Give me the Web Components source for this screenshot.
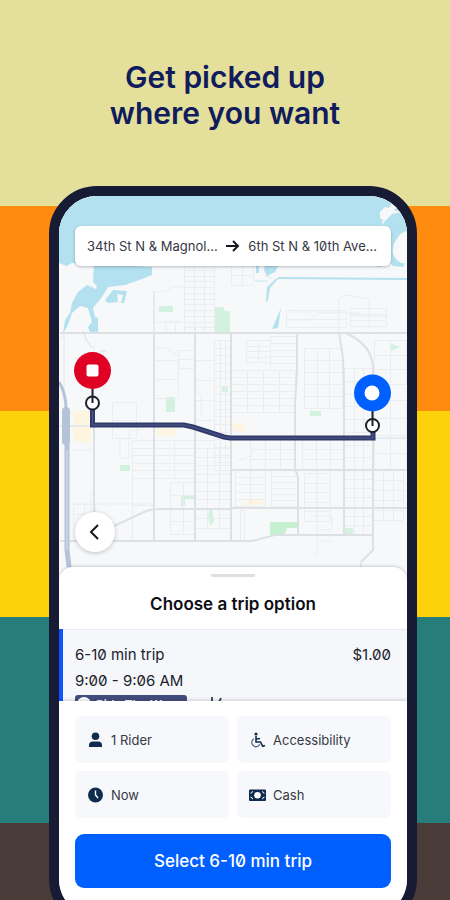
<!DOCTYPE html>
<html lang="en">
<head>
<meta charset="utf-8">
<meta name="viewport" content="width=device-width, initial-scale=1">
<title>Get picked up where you want</title>
<style>
    body {
        margin: 0;
        font-family: Inter, "Liberation Sans", sans-serif;
        font-variant-numeric: slashed-zero;
        color: #20222c;
    }
</style>
</head>
<body>
<promo-poster>
    <span slot="headline">Get picked up<br>where you want</span>
    <phone-frame>
        <trip-map>
            <route-bar>
                <span slot="from">34th St N &amp; Magnol...</span>
                <span slot="to">6th St N &amp; 10th Ave...</span>
            </route-bar>
        </trip-map>
        <trip-sheet>
            <span slot="title">Choose a trip option</span>
            <trip-option>
                <span slot="name">6-10 min trip</span>
                <span slot="price">$1.00</span>
                <span slot="time">9:00 - 9:06 AM</span>
                <span slot="badge">Ride The Wave</span>
            </trip-option>
        </trip-sheet>
        <booking-panel>
            <option-chip icon="rider">1 Rider</option-chip>
            <option-chip icon="wheelchair">Accessibility</option-chip>
            <option-chip icon="clock">Now</option-chip>
            <option-chip icon="cash">Cash</option-chip>
            <span slot="action">Select 6-10 min trip</span>
        </booking-panel>
    </phone-frame>
</promo-poster>

<script>
const posterTemplate = document.createElement('template');
posterTemplate.innerHTML = `
<style>
    :host {
        display: block;
        box-sizing: border-box;
        height: 100vh;
        min-height: 640px;
        overflow: hidden;
        padding: 59px 33px 0 49px;
        background: linear-gradient(
            #e4df9b 206px,
            #ff8c0e 206px 411px,
            #fdd20b 411px 617px,
            #277d79 617px 823px,
            #4a3c38 823px);
    }

    h1 {
        margin: 0 16px 55px 0;
        font-size: 30px;
        font-weight: 600;
        line-height: 36px;
        text-align: center;
        color: #101c5c;
    }
</style>
<h1><slot name="headline"></slot></h1>
<slot></slot>
`;

const phoneTemplate = document.createElement('template');
phoneTemplate.innerHTML = `
<style>
    :host {
        display: flex;
        flex-direction: column;
        border: 10px solid #181b34;
        border-radius: 48px;
        overflow: hidden;
        background: #fff;
    }
</style>
<slot></slot>
`;

const mapTemplate = document.createElement('template');
mapTemplate.innerHTML = `
<style>
    :host {
        display: grid;
        height: 384px;
    }

    svg.map {
        grid-area: 1 / 1;
        display: block;
        width: 100%;
        height: 384px;
    }

    .overlay {
        grid-area: 1 / 1;
        z-index: 1;
        display: flex;
        flex-direction: column;
        justify-content: space-between;
        align-items: flex-start;
        padding: 30px 16px 28px;
    }

    slot {
        display: block;
        width: 100%;
    }

    button {
        display: grid;
        place-items: center;
        width: 40px;
        height: 40px;
        padding: 0;
        border: 0;
        border-radius: 50%;
        background: #fff;
        box-shadow: 0 1px 4px rgba(30, 35, 60, .25);
    }

    .minor { stroke: #ebedf0; stroke-width: 1; }
    .major { stroke: #dee1e4; stroke-width: 2; }
</style>
<svg class="map" viewBox="59 196 348 384" preserveAspectRatio="xMidYMid slice" fill="none" aria-hidden="true">
    <path fill="#f7f8f9" d="M59 196h348v384H59z"/>

    <!-- bay, inlets and canals -->
    <g fill="#b3e1ef">
        <path d="M59 196h348v64l-4 7-10-1-2-3-12 4-6-2H94l-22-2-6 3-7-3z"/>
        <path d="M94 264l58 3v8l-10 4-17 6-17 2-6 10-9 11 2 9 3 1v14h-8l-2-5 4-5-4-14-8-2-8 7-5 14-4 6 2-13 5-7 2-10 6-11 9-7 9 4 1-3-4-4z"/>
        <path d="M105 300l8-10 14 1-3 12h-3l2-8-6-1 1 8-10 1z"/>
        <path d="M277 278l-10 9-1 16 2-3 2-12 8-9zM281 308l-9 21 6-1z"/>
        <path d="M265 264h14l-4 8-8 4-3-6zM256 266h3v7h-3z"/>
        <path d="M278 277l129 1v2l-129-1z"/>
    </g>
    <path stroke="#c8e6ea" d="M83 331l3 8 6 9M100 351h6M255 281h13M269 270l8-5M265 275l6 3"/>
    <g fill="#f7f8f9">
        <path d="M407 231q-8 2-10 8-5 6-4 14 2 8 9 10l5 1z"/>
        <path d="M380 212l5-5 4 1 4-6 6 5-6 3 8 2-9 2-7 7-4 5 2-6-3-2z"/>
    </g>

    <!-- parks -->
    <g fill="#d3f1df">
        <path d="M159 306h14v6h-14zM214 307h9l2 4h5v21h-16zM166 397h9v15h-9zM222 386h6v6h-6zM120 465h10v6h-10zM310 411h11v5h-11zM391 344l9 3-9 4zM181 495h13v4h-9v7h-4zM209 510h3l2 10-3 6-3-7zM344 528h9v7h-9z"/>
        <path fill="#c5f0d2" d="M270 522h28v6h-11l-3 7h-14z"/>
    </g>
    <g fill="#fdf5df">
        <path d="M73 411h18v32l-18-2zM157 428h18v8h-18zM233 423h12v8h-12zM246 500h16v5h-16z"/>
    </g>

    <g class="minor blocks"></g>
    <g class="minor">
        <path d="M154 292h10l8-5h12M166 333v-12h14M339 332v-33l6-4 24 4v30M285 320h24l10-7h42M291 312h52M350 316h38M238 460q16-1 16-14M94 345v100M91 512v-20M90 402q12-8 18-22M120 438v20h9v-28h15M317 470v86M155 349l10-2 14 10v11M193 386l8 10v20M310 516h22v14h-13M320 541h12M73 450h21M73 504h81"/>
    </g>

    <g class="major">
        <path d="M60 333h347M94 425v100M154 333v208M195 333v208M231 333v208M297 333v40l-2 30v66l3 8v58M339 333l4 25 1 28v149M346 333q26 12 27 34v183l-12 12M231 470h176M231 508h176M114 526l30-14q6-3 15-3h72M60 541h192l23-6h98"/>
        <path stroke="#e6eaee" d="M154 291v42M60 426h32M374 438h33M361 562v18"/>
    </g>
    <g stroke="#e2e6ee">
        <path d="M64 335v58M60 338l6-5"/>
    </g>

    <!-- interstate -->
    <g stroke="#b4c3d8">
        <path stroke-width="3" d="M59 382q7 12 7 26"/>
        <path stroke-width="8" stroke-linecap="round" d="M66 411v30"/>
        <path stroke-width="5" d="M67 440v110l2 17"/>
        <path stroke="#dce4ee" d="M67 450v100"/>
    </g>

    <!-- route -->
    <path stroke="#303a6b" stroke-width="5" d="M92.500 403v22H184l9 2 31 10 6 1h143v-13"/>
    <path stroke="#4e598a" stroke-width="1" d="M92.500 410v15H184l9 2 31 10 6 1h143v-10"/>

    <g stroke="#1d202b" stroke-width="2" fill="#fff">
        <circle cx="92.500" cy="403" r="6.500"/>
        <path d="M92.500 387v16"/>
        <circle cx="372.500" cy="425.500" r="6.500"/>
        <path d="M372.500 409v17"/>
    </g>
    <circle cx="92.500" cy="370.500" r="18.500" fill="#e00225"/>
    <rect x="86.500" y="364.500" width="12" height="12" rx="2" fill="#fff"/>
    <circle cx="372.500" cy="393" r="18.500" fill="#005fff"/>
    <circle cx="372" cy="393" r="7.500" fill="#fff"/>
</svg>
<div class="overlay">
    <slot></slot>
    <button type="button" aria-label="Back">
        <svg width="18" height="18" viewBox="0 0 18 18" fill="none" stroke="#16181f" stroke-width="2"><path d="M12 2L5 9l7 7"/></svg>
    </button>
</div>
`;

const routeBarTemplate = document.createElement('template');
routeBarTemplate.innerHTML = `
<style>
    :host {
        display: block;
    }

    button {
        display: flex;
        align-items: center;
        justify-content: space-between;
        width: 100%;
        height: 40px;
        padding: 0 14px 0 12px;
        border: 0;
        border-radius: 6px;
        background: #fff;
        box-shadow: 0 1px 3px rgba(30, 35, 60, .3);
        font: inherit;
        font-size: 13px;
        line-height: 20px;
        color: #353843;
        white-space: nowrap;
    }
</style>
<button type="button">
    <slot name="from"></slot>
    <svg width="14" height="14" viewBox="0 0 14 14" fill="none" stroke="#16181f" stroke-width="2" aria-hidden="true"><path d="M0 7h12M7 2l5 5-5 5"/></svg>
    <slot name="to"></slot>
</button>
`;

const sheetTemplate = document.createElement('template');
sheetTemplate.innerHTML = `
<style>
    :host {
        display: block;
        z-index: 1;
        margin-top: -13px;
        border-radius: 14px 14px 0 0;
        background: #fff;
        box-shadow: 0 -1px 3px rgba(30, 35, 60, .2);
    }

    .handle {
        width: 44px;
        height: 3px;
        margin: 0 auto;
        border-top: 7px solid transparent;
        border-radius: 1px;
        background: #dfe0e3;
        background-clip: padding-box;
    }

    h2 {
        margin: 0;
        padding: 15px 0 13px;
        font-size: 17px;
        font-weight: 600;
        line-height: 24px;
        text-align: center;
        color: #0d0e14;
    }
</style>
<div class="handle"></div>
<h2><slot name="title"></slot></h2>
<slot></slot>
`;

const tripOptionTemplate = document.createElement('template');
tripOptionTemplate.innerHTML = `
<style>
    /* only the top of the third line shows above the booking panel */
    :host {
        display: block;
        height: 72px;
        overflow: hidden;
    }

    button {
        display: flex;
        flex-direction: column;
        width: 100%;
        padding: 13px 16px 13px 12px;
        border: 0;
        border-left: 4px solid #0a55ff;
        background: #f5f7fb;
        box-shadow: inset 0 1px #e9ebf0;
        font: inherit;
        font-size: 15px;
        line-height: 26px;
        text-align: left;
        color: #20222c;
    }

    .row {
        display: flex;
        align-items: center;
        justify-content: space-between;
        width: 100%;
    }

    .details {
        justify-content: flex-start;
        gap: 20px;
        margin-top: 1px;
    }

    .badge {
        display: flex;
        align-items: center;
        gap: 5px;
        height: 20px;
        padding: 0 5px 0 2px;
        border-radius: 3px;
        background: #414b7c;
        font-size: 12px;
        font-weight: 600;
        line-height: 18px;
        color: #fff;
    }
</style>
<button type="button">
    <span class="row"><slot name="name"></slot><slot name="price"></slot></span>
    <slot name="time"></slot>
    <span class="row details">
        <span class="badge">
            <svg width="14" height="16" viewBox="0 0 14 16" aria-hidden="true"><circle cx="7" cy="7" r="7" fill="#fff"/></svg>
            <slot name="badge"></slot>
        </span>
        <svg width="16" height="18" viewBox="0 0 16 18" fill="none" stroke="#4b4e5a" stroke-width="2" aria-hidden="true"><path d="M5 1v5l-3 4M4 6l4 3M14 2l-4 8 3 6"/></svg>
    </span>
</button>
`;

const panelTemplate = document.createElement('template');
panelTemplate.innerHTML = `
<style>
    :host {
        display: block;
        z-index: 1;
        padding: 15px 16px 29px;
        background: #fff;
        box-shadow: 0 -1px 3px rgba(30, 35, 60, .2);
    }

    .chips {
        display: grid;
        grid-template-columns: 1fr 1fr;
        gap: 8px;
        margin-bottom: 16px;
    }

    button {
        display: block;
        width: 100%;
        height: 54px;
        border: 0;
        border-radius: 9px;
        background: #005fff;
        font: inherit;
        font-size: 17px;
        font-weight: 500;
        color: #fff;
    }
</style>
<div class="chips"><slot></slot></div>
<button type="button"><slot name="action"></slot></button>
`;

const chipTemplate = document.createElement('template');
chipTemplate.innerHTML = `
<style>
    :host {
        display: block;
    }

    button {
        display: flex;
        align-items: center;
        gap: 7px;
        width: 100%;
        height: 47px;
        padding: 0 12px;
        border: 0;
        border-radius: 6px;
        background: #f6f8fb;
        font: inherit;
        font-size: 13px;
        color: #353843;
    }

    svg {
        display: block;
    }
</style>
<button type="button">
    <svg width="17" height="16" viewBox="0 0 17 16" aria-hidden="true"></svg>
    <slot></slot>
</button>
`;

const icons = {
    rider: '<circle cx="8.500" cy="4.300" r="3.800" fill="#0f2b4d"/><path fill="#0f2b4d" d="M2 15v-2q0-3.500 4-3.500h5q4 0 4 3.500v2z"/>',
    wheelchair: '<g fill="none" stroke="#0f2b4d" stroke-width="1.600"><path d="M7 4v6h4.500l2.200 4.200 2.300-.8M7 6.800h4"/><path stroke="#5a6c86" stroke-width="1.300" d="M5 6.800a4.200 4.200 0 1 0 5.800 5.400"/></g><circle cx="7" cy="2" r="1.600" fill="#0f2b4d"/>',
    clock: '<circle cx="8.500" cy="8" r="7.500" fill="#0f2b4d"/><path fill="none" stroke="#fff" stroke-width="1.400" d="M8.500 3.500V8l2.500 3"/>',
    cash: '<rect x="0" y="2.500" width="17" height="11.500" rx="1" fill="#0f2b4d"/><circle cx="8.500" cy="8.200" r="3.300" fill="#fff"/><path fill="none" stroke="#fff" d="M1.500 6.200q2 0 2-2M15.500 6.200q-2 0-2-2M1.500 10.200q2 0 2 2M15.500 10.200q-2 0-2 2"/>'
};

// street grids of the map: x, y, width, height, columns, rows
const blocks = [
    [184, 264, 30, 69, 3, 12],
    [154, 322, 41, 11, 2, 1],
    [178, 350, 17, 18, 1, 2],
    [214, 340, 17, 130, 3, 17],
    [231, 264, 22, 21, 2, 2],
    [246, 340, 24, 22, 2, 4],
    [270, 336, 26, 34, 1, 5],
    [231, 370, 64, 42, 4, 6],
    [304, 348, 38, 60, 3, 5],
    [344, 368, 29, 102, 3, 8],
    [374, 340, 32, 44, 2, 3],
    [374, 400, 32, 70, 2, 4],
    [132, 440, 63, 38, 3, 5],
    [154, 360, 24, 38, 1, 2],
    [195, 448, 36, 60, 3, 7],
    [195, 360, 19, 80, 1, 4],
    [73, 504, 22, 20, 2, 2],
    [132, 470, 22, 70, 1, 2],
    [170, 482, 25, 52, 2, 4],
    [195, 508, 36, 20, 3, 2],
    [235, 470, 30, 36, 2, 5],
    [271, 470, 26, 36, 1, 6],
    [304, 473, 26, 48, 2, 5],
    [344, 470, 29, 64, 3, 7],
    [373, 470, 30, 50, 3, 5],
    [286, 310, 60, 17, 1, 2],
    [350, 308, 36, 18, 1, 3],
    [250, 438, 45, 32, 3, 3],
    [302, 438, 42, 32, 3, 3],
    [112, 402, 24, 36, 1, 2],
    [240, 510, 4, 30, 1, 1]
];

function blockPath(x, y, w, h, cols, rows) {
    let d = '';
    for (let i = 0; i <= cols; i++) {
        d += 'M' + (Math.round(x + w * i / cols) + .5) + ' ' + y + 'v' + h;
    }
    for (let i = 0; i <= rows; i++) {
        d += 'M' + x + ' ' + (Math.round(y + h * i / rows) + .5) + 'h' + w;
    }
    return '<path d="' + d + '"/>';
}

class TemplateElement extends HTMLElement {
    constructor(template) {
        super();

        this._shadowRoot = this.attachShadow({ mode: 'open' });
        this._shadowRoot.appendChild(template.content.cloneNode(true));
    }
}

class PromoPoster extends TemplateElement {
    constructor() { super(posterTemplate); }
}

class PhoneFrame extends TemplateElement {
    constructor() { super(phoneTemplate); }
}

class TripMap extends TemplateElement {
    constructor() {
        super(mapTemplate);

        this._shadowRoot.querySelector('.blocks').innerHTML = blocks.map(block => blockPath(...block)).join('');
    }
}

class RouteBar extends TemplateElement {
    constructor() { super(routeBarTemplate); }
}

class TripSheet extends TemplateElement {
    constructor() { super(sheetTemplate); }
}

class TripOption extends TemplateElement {
    constructor() { super(tripOptionTemplate); }
}

class BookingPanel extends TemplateElement {
    constructor() { super(panelTemplate); }
}

class OptionChip extends TemplateElement {
    constructor() { super(chipTemplate); }

    connectedCallback() {
        this._shadowRoot.querySelector('svg').innerHTML = icons[this.getAttribute('icon')] || '';
    }
}

window.customElements.define('promo-poster', PromoPoster);
window.customElements.define('phone-frame', PhoneFrame);
window.customElements.define('trip-map', TripMap);
window.customElements.define('route-bar', RouteBar);
window.customElements.define('trip-sheet', TripSheet);
window.customElements.define('trip-option', TripOption);
window.customElements.define('booking-panel', BookingPanel);
window.customElements.define('option-chip', OptionChip);
</script>
</body>
</html>
